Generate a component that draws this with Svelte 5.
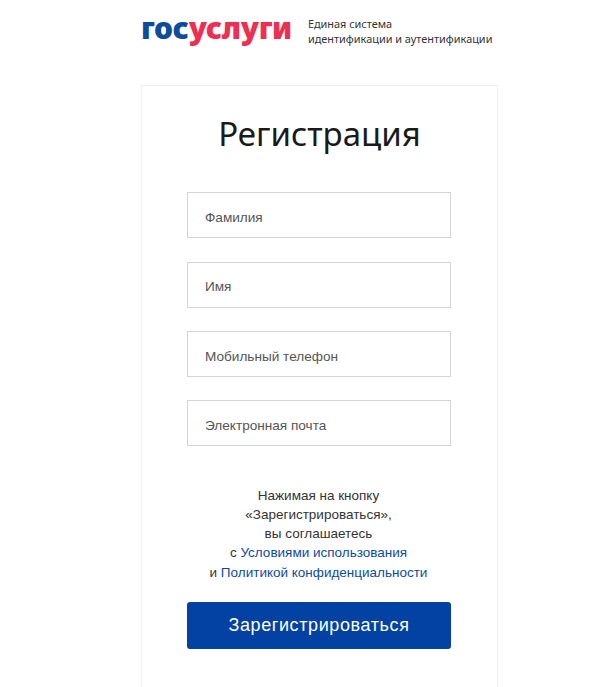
<script>
	const fields = ['Фамилия', 'Имя', 'Мобильный телефон', 'Электронная почта'];
</script>

<div class="page">
	<header class="top">
		<div class="logo"><span class="blue">гос</span><span class="red">услуги</span></div>
		<div class="tagline">Единая система<br />идентификации и аутентификации</div>
	</header>

	<main class="card">
		<h1>Регистрация</h1>

		<form class="fields" onsubmit={(e) => e.preventDefault()}>
			{#each fields as field}
				<input type="text" placeholder={field} />
			{/each}

			<p class="terms">
				Нажимая на кнопку<br />
				«Зарегистрироваться»,<br />
				вы соглашаетесь<br />
				с <a href="#terms">Условиями использования</a><br />
				и <a href="#privacy">Политикой конфиденциальности</a>
			</p>

			<button type="submit">Зарегистрироваться</button>
		</form>
	</main>
</div>

<style>
	:global(body) {
		background: #fff;
		font-family: 'Liberation Sans', Arial, sans-serif;
	}

	.page {
		width: 615px;
		height: 687px;
		overflow: hidden;
		padding-left: 141px;
		box-sizing: border-box;
	}

	.top {
		display: flex;
		align-items: center;
		gap: 16px;
		height: 60px;
		padding-bottom: 1px;
	}

	.logo {
		font-family: 'Noto Sans', sans-serif;
		font-size: 30px;
		font-weight: 900;
		letter-spacing: -0.3px;
		line-height: 36px;
		margin-top: -5px;
	}

	.blue {
		color: #0d4b9b;
	}

	.red {
		color: #ee2f53;
	}

	.tagline {
		font-family: 'Noto Sans', sans-serif;
		font-size: 10.9px;
		line-height: 15px;
		color: #333;
		margin-top: 1px;
	}

	.card {
		width: 357px;
		margin-top: 24px;
		height: 640px;
		box-sizing: border-box;
		border: 1px solid #f0f0f0;
		padding: 0 45px;
	}

	h1 {
		margin: 25px 0 0;
		font-family: 'Noto Sans', sans-serif;
		font-size: 33px;
		font-weight: 400;
		line-height: 46px;
		text-align: center;
		color: #1a1a1a;
	}

	.fields {
		display: flex;
		flex-direction: column;
		gap: 23.4px;
		margin-top: 35.3px;
	}

	input {
		width: 264px;
		height: 46px;
		box-sizing: border-box;
		border: 1px solid #d4d4d4;
		padding: 4px 17px 0;
		font-family: inherit;
		font-size: 13.6px;
		outline: none;
	}

	input::placeholder {
		color: #555;
		opacity: 1;
	}

	.terms {
		margin: 15.7px 0 0;
		padding-right: 2px;
		font-size: 13.5px;
		line-height: 19.3px;
		text-align: center;
		color: #333;
	}

	a {
		color: #0d4b9b;
		text-decoration: none;
	}

	button {
		width: 264px;
		height: 47px;
		margin-top: -3px;
		border: none;
		border-radius: 3px;
		background: #0342a3;
		color: #fff;
		font-family: inherit;
		font-size: 18px;
		letter-spacing: 0.6px;
	}
</style>
